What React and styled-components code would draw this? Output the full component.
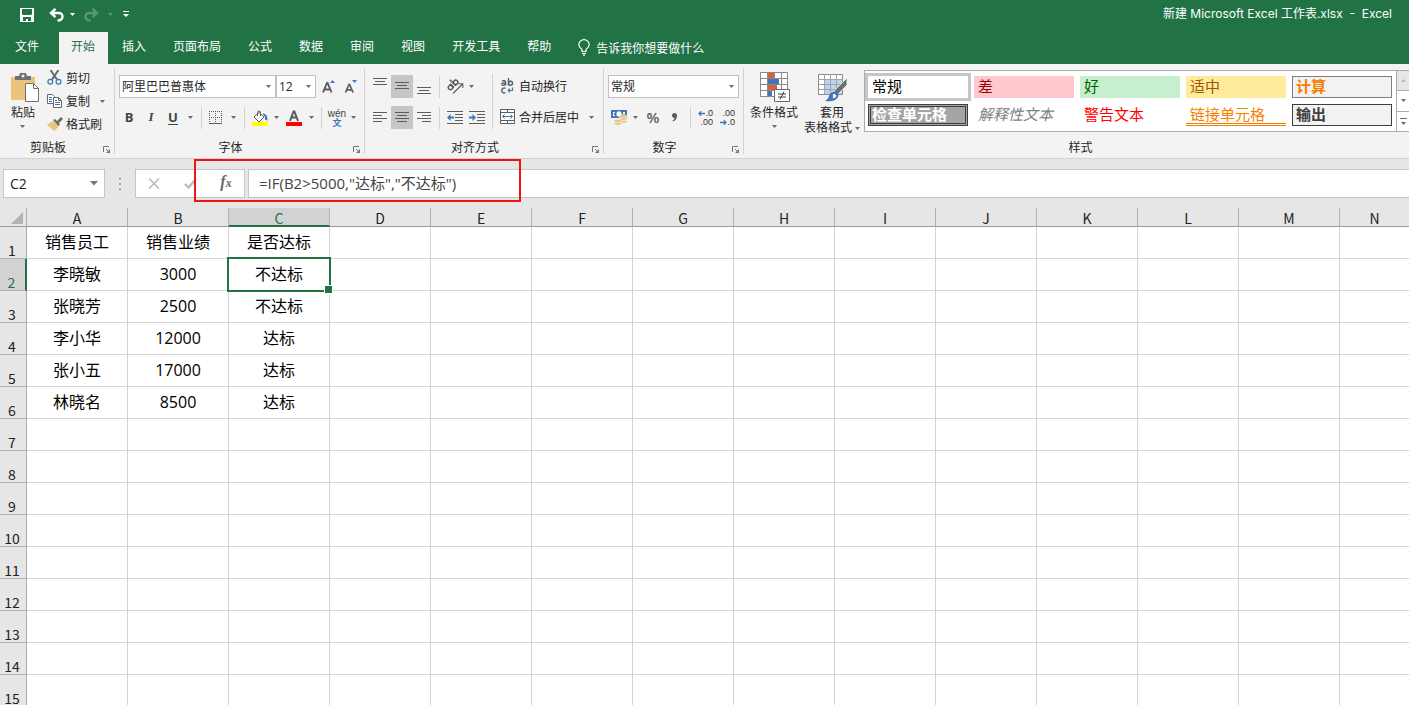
import React from 'react';
import styled, { createGlobalStyle, css } from 'styled-components';

const COLUMNS = ['A', 'B', 'C', 'D', 'E', 'F', 'G', 'H', 'I', 'J', 'K', 'L', 'M', 'N'];

const DATA = [
  ['销售员工', '销售业绩', '是否达标'],
  ['李晓敏', '3000', '不达标'],
  ['张晓芳', '2500', '不达标'],
  ['李小华', '12000', '达标'],
  ['张小五', '17000', '达标'],
  ['林晓名', '8500', '达标'],
];

const ROW_COUNT = 15;

const TABS = ['开始', '插入', '页面布局', '公式', '数据', '审阅', '视图', '开发工具', '帮助'];

const CELL_STYLES = [
  { name: '常规', color: '#000', bg: '#fff', outline: '3px solid #c6c6c6', outside: true },
  { name: '差', color: '#9c0006', bg: '#ffc7ce' },
  { name: '好', color: '#006100', bg: '#c6efce' },
  { name: '适中', color: '#9c5700', bg: '#ffeb9c' },
  { name: '计算', color: '#fa7d00', bg: '#f2f2f2', outline: '1px solid #7f7f7f', bold: true },
  { name: '检查单元格', color: '#fff', bg: '#a5a5a5', outline: '3px double #3f3f3f', bold: true },
  { name: '解释性文本', color: '#7f7f7f', italic: true },
  { name: '警告文本', color: '#ff0000' },
  { name: '链接单元格', color: '#fa7d00', underline: true },
  { name: '输出', color: '#3f3f3f', bg: '#f2f2f2', outline: '1px solid #3f3f3f', bold: true },
];

/* ---------- icons ---------- */

const Arrow = ({ color = '#6a6a6a' }) => (
  <svg width="5" height="3" viewBox="0 0 5 3" fill={color}><path d="M0 0h5L2.5 3z" /></svg>
);

const SaveIcon = () => (
  <svg width="14" height="14" viewBox="0 0 14 14" fill="#fff" fillRule="evenodd">
    <path d="M0 0h14v14H0zM2 1v5l1 1h8l1-1V1zM3 9v4h3v-2h2v2h3V9z" />
  </svg>
);

const UndoIcon = ({ flip }) => (
  <svg width="15" height="14" viewBox="0 0 15 14" fill="none" stroke="#fff" strokeWidth="2.4" opacity={flip ? 0.25 : 1}>
    <g transform={flip ? 'translate(15 0) scale(-1 1)' : undefined}>
      <path d="M6.5 0.8L2 5l4.500 4.200M2.500 5H9.500c3 0 4 1.600 4 3.500 0 2.500-2 4-5 4" />
    </g>
  </svg>
);

const CustomizeIcon = () => (
  <svg width="6" height="7" viewBox="0 0 6 7" fill="#fff"><path d="M0 0h6v1H0zM0 3h6L3 6z" /></svg>
);

const BulbIcon = () => (
  <svg width="12" height="17" viewBox="0 0 12 17" fill="none" stroke="#fff" strokeWidth="1.2">
    <path d="M4 12.500V10.500C2 9 .8 7.800.8 5.600a5.200 4.900 0 0 1 10.400 0C11.200 7.800 10 9 8 10.500v2zM4 14.500h4M5 16.200h2" />
  </svg>
);

const PasteIcon = () => (
  <svg width="34" height="31" viewBox="-5 0 34 31">
    <path d="M0 5h24v23H0z" fill="#ecc37b" />
    <path d="M4 8V4h4l1-3h6l1 3h4v4z" fill="#717171" />
    <circle cx="12" cy="4" r="1.500" fill="#f3f3f3" />
    <path d="M14.500 11.500h8l5 5v13h-13z" fill="#fff" stroke="#717171" />
    <path d="M22.500 11.500v5h5" fill="none" stroke="#717171" />
  </svg>
);

const CutIcon = () => (
  <svg width="15" height="15" viewBox="0 0 15 15" fill="none">
    <path d="M3.500 0L10 9.500M11.500 0L5 9.500" stroke="#6a6a6a" strokeWidth="2" />
    <circle cx="3.300" cy="11.700" r="2.400" stroke="#3f78b4" strokeWidth="1.200" />
    <circle cx="11.500" cy="11.700" r="2.400" stroke="#3f78b4" strokeWidth="1.200" />
  </svg>
);

const CopyIcon = () => (
  <svg width="15" height="14" viewBox="0 0 15 14">
    <path d="M.5.5h5l2 2v7h-7z" fill="#fff" stroke="#6a6a6a" />
    <path d="M2 3.500h3M2 5.500h3M2 7.500h3" stroke="#3f78b4" />
    <path d="M6.500 3.500h5l3 3v7h-8z" fill="#fff" stroke="#6a6a6a" />
    <path d="M11.500 3.500v3h3" fill="none" stroke="#6a6a6a" />
    <path d="M8 6.500h2M8 8.500h5M8 10.500h5" stroke="#3f78b4" />
  </svg>
);

const BrushIcon = () => (
  <svg width="16" height="14" viewBox="0 0 16 14">
    <path d="M6 4l6 5-4.500 5C4.500 12 2 10 0 7.500z" fill="#ecc37b" />
    <path d="M6 3l2-1 5 5-1.500 2zM10 4l4-4 2 2-4 4z" fill="#6a6a6a" />
  </svg>
);

const LauncherIcon = () => (
  <svg width="8" height="8" viewBox="0 0 8 8" fill="none" stroke="#777">
    <path d="M.5 6V.5H6M3 3l3.500 3.500" />
    <path d="M7 3v4H3z" fill="#777" stroke="none" />
  </svg>
);

const GrowIcon = ({ down }) => (
  <svg width="14" height="16" viewBox="0 0 14 16">
    {down ? (
      <>
        <path d="M1.500 13.500L5 5.500h.6l3.500 8M2.800 10.800h5" fill="none" stroke="#5c5c5c" strokeWidth="1.700" />
        <path d="M8 1h5l-2.500 3z" fill="#3f78b4" />
      </>
    ) : (
      <>
        <path d="M1 13.500L5 4h.6l4 9.500M2.500 10.500h5.500" fill="none" stroke="#5c5c5c" strokeWidth="1.900" />
        <path d="M8 4h5l-2.500-3z" fill="#3f78b4" />
      </>
    )}
  </svg>
);

const BorderIcon = () => (
  <svg width="14" height="14" viewBox="0 0 14 14" stroke="#5c5c5c">
    <path d="M0 .5h13M0 6.500h13M.5 0v13M6.500 0v13M12.500 0v13" strokeDasharray="1 1" />
    <path d="M0 12.500h13" />
  </svg>
);

const BucketIcon = () => (
  <svg width="16" height="16" viewBox="0 0 16 16">
    <path d="M7 2.500L12 7l-5 5-5-5z" fill="#fff" stroke="#5c5c5c" />
    <path d="M5.500 6V2.500a1.500 1.500 0 0 1 3 0V6" fill="none" stroke="#5c5c5c" />
    <path d="M10.500 3.500c3.500 0 5 2 5 7-2 0-3-1-2.500-3.500z" fill="#3f78b4" />
    <path d="M0 12h16v4H0z" fill="#ff0" />
  </svg>
);

const FontColorIcon = () => (
  <svg width="16" height="16" viewBox="0 0 16 16">
    <path d="M4 11L7.600 1.500h.8L12 11M5.500 7.500h5" fill="none" stroke="#5c5c5c" strokeWidth="2" />
    <path d="M0 12h16v4H0z" fill="#f00" />
  </svg>
);

const LINES = {
  full: [[0, 14], [2, 10], [0, 14]],
  left: [[0, 14], [0, 9], [0, 14], [0, 9]],
  center: [[0, 14], [2, 10], [0, 14], [2, 10]],
  right: [[0, 14], [5, 9], [0, 14], [5, 9]],
};

const LinesIcon = ({ kind, top = 1 }) => (
  <svg width="14" height="17" viewBox="0 0 14 17" fill="#5c5c5c">
    {LINES[kind].map(([x, w], i) => (
      <rect key={i} x={x} y={top + i * 3} width={w} height="1" />
    ))}
  </svg>
);

const OrientationIcon = () => (
  <svg width="18" height="17" viewBox="0 0 18 17" fill="none" stroke="#5c5c5c" strokeWidth="1.500">
    <g transform="rotate(-45 6 7)">
      <circle cx="2.500" cy="7" r="2.200" />
      <path d="M4.800 4v5.500M7.500 1v8.500" />
      <circle cx="9.800" cy="7" r="2.200" />
    </g>
    <path d="M6 15.500L15.500 6M11.500 5.700h4.300V10" strokeWidth="1.100" />
  </svg>
);

const IndentIcon = ({ more }) => (
  <svg width="16" height="15" viewBox="0 0 16 15">
    <path d="M0 1.500h16M8 4.500h8M8 7.500h8M8 10.500h8M0 13.500h16" stroke="#5c5c5c" />
    <path d={more ? 'M7 7.500L3.500 4v2.500H0v2h3.500V11z' : 'M0 7.500L3.500 4v2.500H7v2H3.500V11z'} fill="#3f78b4" />
  </svg>
);

const WrapIcon = () => (
  <svg width="13" height="16" viewBox="0 0 13 16" fill="none" stroke="#5c5c5c" strokeWidth="1.400">
    <path d="M1 3.200c1.500-.9 3.600-.6 3.600 1v3.300M4.600 5C2 4.800.8 5.300.8 6.200c0 1.500 2.800 1.500 3.800 0M7.500 0v7.500" />
    <circle cx="9.500" cy="5.200" r="2" />
    <path d="M4.500 10.300c-2-.8-3.700.2-3.700 2.200s1.700 3 3.700 2.100" />
    <path d="M11.500 9.500v3H7.500M9 10.700l-1.800 1.800L9 14.300" stroke="#3f78b4" strokeWidth="1.200" />
  </svg>
);

const MergeIcon = () => (
  <svg width="15" height="15" viewBox="0 0 15 15" fill="none">
    <path d="M.5.5h14v14H.5zM.5 3.500h14M.5 11.500h14M7.500 0v3.500M7.500 11.500v3" stroke="#5c5c5c" fill="#fff" />
    <path d="M2.500 7.500h10M4.500 5.500l-2 2 2 2M10.500 5.500l2 2-2 2" stroke="#3f78b4" />
  </svg>
);

const CurrencyIcon = () => (
  <svg width="16" height="17" viewBox="0 0 16 17">
    <path d="M0 1h16v8H0z" fill="#3f78b4" />
    <path d="M2 3h2v1H3v2h1v1H2zM12 3h2v2h-2z" fill="#fff" />
    <ellipse cx="8" cy="5" rx="2.600" ry="2.800" fill="#fff" />
    <g fill="#ecc37b" stroke="#f3f3f3" strokeWidth=".7">
      <ellipse cx="12" cy="12.500" rx="4" ry="1.800" />
      <ellipse cx="12" cy="10" rx="4" ry="1.800" />
      <ellipse cx="12" cy="7.500" rx="4" ry="1.800" />
      <ellipse cx="7" cy="14.500" rx="4" ry="1.800" />
      <ellipse cx="7" cy="12" rx="4" ry="1.800" />
    </g>
  </svg>
);

const CommaIcon = () => (
  <svg width="6" height="9" viewBox="0 0 6 9" fill="#5c5c5c">
    <path d="M0 2.500a2.500 2.500 0 0 1 5 0c0 3-1.200 5-4 6l-.5-.9C1.800 6.900 2.400 6 2.500 5 1 5 0 4 0 2.500z" />
  </svg>
);

const DecimalArrow = ({ right }) => (
  <svg width="7" height="5" viewBox="0 0 7 5" fill="none" stroke="#3f78b4" strokeWidth="1.300">
    <path d={right ? 'M0 2.500h6M3.800.3L6 2.500 3.800 4.700' : 'M7 2.500H1M3.200.3L1 2.500l2.200 2.200'} />
  </svg>
);

const ConditionalIcon = () => (
  <svg width="33" height="31" viewBox="-2 0 33 31">
    <path d="M.5.500h27v24H.5z" fill="#fff" stroke="#8a8a8a" />
    <path d="M.5 6.500h27M.5 12.500h27M.5 18.500h27M7.500 0v24M14.500 0v24M21.500 0v24" stroke="#8a8a8a" fill="none" />
    <path d="M8 1h6v5H8zM8 13h9v5H8z" fill="#d8603c" />
    <path d="M8 7h11v5H8zM8 19h4v5H8z" fill="#3f78b4" />
    <path d="M14.500 17.500h15v12h-15z" fill="#fff" stroke="#6a6a6a" />
    <path d="M18 22h8M18 25h8M24 19.500l-4 8" stroke="#444" fill="none" />
  </svg>
);

const FormatTableIcon = () => (
  <svg width="31" height="31" viewBox="0 0 31 31">
    <path d="M1.500 2.500h24v20h-24z" fill="#fff" stroke="#8a8a8a" />
    <path d="M8 7h17v15H8z" fill="#bfd4ea" />
    <path d="M1.500 7.500h24M1.500 12.500h24M1.500 17.500h24M7.500 2v20M13.500 2v20M19.500 2v20" stroke="#9aa5b0" fill="none" />
    <path d="M30 6v7l-9 9-4-3z" fill="#6f6f6f" stroke="#f3f3f3" strokeWidth=".8" />
    <path d="M16 20c4-1.500 7 1.500 5 5-2 4-7 5-13 4 3-1.500 3-3 4-5 .8-2 2-3.500 4-4z" fill="#3f78b4" />
    <path d="M16 22c2-.5 4 .8 3 2.800-.8 1.500-2 1.700-3.200 1.200z" fill="#f3f3f3" />
  </svg>
);

const CancelIcon = () => (
  <svg width="12" height="11" viewBox="0 0 12 11" stroke="#bcbcbc" strokeWidth="1.600"><path d="M1 .5l10 10M11 .5l-10 10" /></svg>
);

const EnterIcon = () => (
  <svg width="13" height="11" viewBox="0 0 13 11" fill="none" stroke="#bcbcbc" strokeWidth="2.400"><path d="M1 6l3.500 3.500L12 1" /></svg>
);

/* ---------- page ---------- */

function DropButton({ width, label }) {
  return <ToolButton $w={width} aria-label={label}><Arrow /></ToolButton>;
}

function RibbonGroup({ label, width, children, launcher = true }) {
  return (
    <Group $w={width}>
      <GroupBody>{children}</GroupBody>
      <GroupFooter $indent={!launcher}>
        <GroupName>{label}</GroupName>
        {launcher && <Launcher aria-label={`${label}设置`}><LauncherIcon /></Launcher>}
      </GroupFooter>
    </Group>
  );
}

function Combo({ label, value, width }) {
  return (
    <ComboBox $w={width}>
      <select aria-label={label} defaultValue={value}>
        <option>{value}</option>
      </select>
      <Arrow />
    </ComboBox>
  );
}

function Ribbon() {
  return (
    <RibbonBar>
      <RibbonGroup label="剪贴板" width={115}>
        <BigButton $w={38}>
          <PasteIcon />
          <span>粘贴</span>
          <ArrowLine><Arrow /></ArrowLine>
        </BigButton>
        <ClipList>
          <SmallButton><IconBox $w={16}><CutIcon /></IconBox>剪切</SmallButton>
          <ToolRow>
            <SmallButton><IconBox $w={16}><CopyIcon /></IconBox>复制</SmallButton>
            <DropButton width={24} label="复制选项" />
          </ToolRow>
          <SmallButton><IconBox $w={16}><BrushIcon /></IconBox>格式刷</SmallButton>
        </ClipList>
      </RibbonGroup>

      <RibbonGroup label="字体" width={250}>
        <ToolRows>
          <ToolRow>
            <Combo label="字体" value="阿里巴巴普惠体" width={157} />
            <Combo label="字号" value="12" width={40} />
            <ToolButton $w={26} aria-label="增大字号"><GrowIcon /></ToolButton>
            <ToolButton $w={18} aria-label="减小字号"><GrowIcon down /></ToolButton>
          </ToolRow>
          <ToolRow>
            <ToolButton $w={20}><Letter $bold>B</Letter></ToolButton>
            <ToolButton $w={24}><Letter $italic>I</Letter></ToolButton>
            <ToolButton $w={20}><Letter $bold $underline>U</Letter></ToolButton>
            <DropButton width={14} label="下划线选项" />
            <Divider />
            <ToolButton $w={20} aria-label="边框"><BorderIcon /></ToolButton>
            <DropButton width={14} label="边框选项" />
            <Divider />
            <ToolButton $w={22} aria-label="填充颜色"><BucketIcon /></ToolButton>
            <DropButton width={11} label="填充颜色选项" />
            <ToolButton $w={23} aria-label="字体颜色"><FontColorIcon /></ToolButton>
            <DropButton width={12} label="字体颜色选项" />
            <Divider />
            <ToolButton $w={22}>
              <Pinyin><span>wén</span><b>文</b></Pinyin>
            </ToolButton>
            <DropButton width={11} label="拼音选项" />
          </ToolRow>
        </ToolRows>
      </RibbonGroup>

      <RibbonGroup label="对齐方式" width={239}>
        <ToolRows>
          <ToolRow>
            <ToolButton $w={22} aria-label="顶端对齐"><LinesIcon kind="full" top={0} /></ToolButton>
            <ToolButton $w={22} $active aria-label="垂直居中"><LinesIcon kind="full" top={4} /></ToolButton>
            <ToolButton $w={22} aria-label="底端对齐"><LinesIcon kind="full" top={9} /></ToolButton>
            <Divider />
            <ToolButton $w={24} aria-label="方向"><OrientationIcon /></ToolButton>
            <DropButton width={6} label="方向选项" />
          </ToolRow>
          <ToolRow>
            <ToolButton $w={22} aria-label="左对齐"><LinesIcon kind="left" top={3} /></ToolButton>
            <ToolButton $w={22} $active aria-label="居中"><LinesIcon kind="center" top={3} /></ToolButton>
            <ToolButton $w={22} aria-label="右对齐"><LinesIcon kind="right" top={3} /></ToolButton>
            <Divider />
            <ToolButton $w={22} aria-label="减少缩进量"><IndentIcon /></ToolButton>
            <ToolButton $w={22} aria-label="增加缩进量"><IndentIcon more /></ToolButton>
          </ToolRow>
        </ToolRows>
        <TallDivider />
        <ToolRows>
          <SmallButton><IconBox $w={16}><WrapIcon /></IconBox>自动换行</SmallButton>
          <ToolRow>
            <SmallButton><IconBox $w={16}><MergeIcon /></IconBox>合并后居中</SmallButton>
            <DropButton width={24} label="合并选项" />
          </ToolRow>
        </ToolRows>
      </RibbonGroup>

      <RibbonGroup label="数字" width={140}>
        <ToolRows>
          <Combo label="数字格式" value="常规" width={131} />
          <ToolRow>
            <ToolButton $w={22} aria-label="会计数字格式"><CurrencyIcon /></ToolButton>
            <DropButton width={10} label="会计数字格式选项" />
            <ToolButton $w={26}><Percent>%</Percent></ToolButton>
            <ToolButton $w={17} aria-label="千位分隔样式"><CommaIcon /></ToolButton>
            <Divider $wide />
            <ToolButton $w={22}>
              <Decimals>
                <div><DecimalArrow />.0</div>
                <div>.00</div>
              </Decimals>
            </ToolButton>
            <ToolButton $w={22}>
              <Decimals>
                <div>.00</div>
                <div><DecimalArrow right />.0</div>
              </Decimals>
            </ToolButton>
          </ToolRow>
        </ToolRows>
      </RibbonGroup>

      <RibbonGroup label="样式" launcher={false}>
        <BigButton $w={52}>
          <ConditionalIcon />
          <span>条件格式</span>
          <ArrowLine><Arrow /></ArrowLine>
        </BigButton>
        <BigButton $w={64}>
          <FormatTableIcon />
          <span>套用</span>
          <span>表格格式 <Arrow /></span>
        </BigButton>
        <Gallery>
          <GalleryGrid>
            {CELL_STYLES.map((s) => (
              <StyleCell key={s.name} $s={s}>{s.name}</StyleCell>
            ))}
          </GalleryGrid>
          <GalleryScroll>
            <button disabled aria-label="上一行">
              <svg width="5" height="3" viewBox="0 0 5 3" fill="#bbb"><path d="M0 3h5L2.500 0z" /></svg>
            </button>
            <button aria-label="下一行"><Arrow /></button>
            <button aria-label="其他">
              <svg width="7" height="7" viewBox="0 0 7 7" fill="#6a6a6a"><path d="M0 0h7v1H0zM1 4h5L3.500 7z" /></svg>
            </button>
          </GalleryScroll>
        </Gallery>
      </RibbonGroup>
    </RibbonBar>
  );
}

function Sheet() {
  const rows = Array.from({ length: ROW_COUNT }, (_, i) => DATA[i] || []);
  return (
    <Grid>
      <colgroup>
        <col className="head" />
        {COLUMNS.map((c, i) => (
          <col key={c} className={i < COLUMNS.length - 1 ? 'col' : undefined} />
        ))}
      </colgroup>
      <thead>
        <tr>
          <Corner aria-label="全选">
            <svg width="12" height="12" viewBox="0 0 12 12" fill="#b4b4b4"><path d="M12 0v12H0z" /></svg>
          </Corner>
          {COLUMNS.map((c) => <ColHead key={c} $active={c === 'C'}>{c}</ColHead>)}
        </tr>
      </thead>
      <tbody>
        {rows.map((row, r) => (
          <tr key={r}>
            <RowHead $active={r === 1}>{r + 1}</RowHead>
            {COLUMNS.map((c, i) => (
              <Cell key={c} $selected={r === 1 && c === 'C'}>{row[i]}</Cell>
            ))}
          </tr>
        ))}
      </tbody>
    </Grid>
  );
}

function App() {
  return (
    <Page>
      <GlobalStyle />
      <TitleBar>
        <QuickAccess>
          <ToolButton $w={28} aria-label="保存"><SaveIcon /></ToolButton>
          <ToolButton $w={30} aria-label="撤消"><UndoIcon /></ToolButton>
          <ToolButton $w={2} aria-label="撤消选项"><Arrow color="#fff" /></ToolButton>
          <ToolButton $w={36} aria-label="恢复"><UndoIcon flip /></ToolButton>
          <ToolButton $w={2} aria-label="恢复选项"><Arrow color="#5b9877" /></ToolButton>
          <ToolButton $w={30} aria-label="自定义快速访问工具栏"><CustomizeIcon /></ToolButton>
        </QuickAccess>
        <WindowTitle>新建 Microsoft Excel 工作表.xlsx&nbsp; -&nbsp; Excel</WindowTitle>
      </TitleBar>
      <TabBar>
        <FileTab>文件</FileTab>
        {TABS.map((t) => <Tab key={t} $active={t === '开始'}>{t}</Tab>)}
        <TellMe><BulbIcon />告诉我你想要做什么</TellMe>
      </TabBar>
      <Ribbon />
      <FormulaBar>
        <NameBox>
          <input aria-label="名称框" defaultValue="C2" />
          <svg width="8" height="5" viewBox="0 0 8 5" fill="#777"><path d="M0 0h8L4 4.500z" /></svg>
        </NameBox>
        <Grip><i /><i /><i /></Grip>
        <FormulaTools>
          <ToolButton $w={36} aria-label="取消"><CancelIcon /></ToolButton>
          <ToolButton $w={36} aria-label="输入"><EnterIcon /></ToolButton>
          <ToolButton $w={36}><Fx>f<small>x</small></Fx></ToolButton>
        </FormulaTools>
        <FormulaInput aria-label="编辑栏" defaultValue={'=IF(B2>5000,"达标","不达标")'} />
        <Highlight />
      </FormulaBar>
      <Sheet />
    </Page>
  );
}

const GlobalStyle = createGlobalStyle`
  * {
    box-sizing: border-box;
  }
  body {
    margin: 0;
    overflow: hidden;
    background: #fff;
    font-family: "Open Sans", "Noto Sans CJK SC", sans-serif;
    font-size: 12px;
    color: #262626;
  }
  button, input, select {
    font: inherit;
    color: inherit;
    margin: 0;
    padding: 0;
    border: 0;
    background: none;
    outline: none;
  }
  svg {
    display: block;
    flex: none;
  }
`

const Page = styled.div`
  height: 100vh;
  overflow: hidden;
`

const TitleBar = styled.header`
  display: flex;
  justify-content: space-between;
  height: 32px;
  padding: 0 17px 0 13px;
  background: #217346;
  color: #fff;
`

const QuickAccess = styled.div`
  display: flex;
  align-items: center;
  height: 29px;
`

const WindowTitle = styled.div`
  font-family: Inter, "Noto Sans CJK SC", sans-serif;
  line-height: 28px;
  white-space: pre;
`

const TabBar = styled.nav`
  display: flex;
  gap: 2px;
  height: 32px;
  background: #217346;
`

const Tab = styled.button`
  padding: 0 13px 4px 12px;
  white-space: nowrap;
  color: ${(p) => (p.$active ? '#217346' : '#fff')};
  background: ${(p) => (p.$active ? '#f3f3f3' : 'none')};
`

const FileTab = styled(Tab)`
  padding: 0 18px 4px 15px;
`

const TellMe = styled.button`
  display: flex;
  align-items: center;
  gap: 6px;
  margin-left: 12px;
  padding-bottom: 1px;
  color: #fff;
  white-space: nowrap;
`

const RibbonBar = styled.section`
  display: flex;
  padding: 4px 0;
  background: #f3f3f3;
  border-bottom: 1px solid #d2d2d2;
`

const Group = styled.div`
  display: flex;
  flex-direction: column;
  height: 86px;
  flex: ${(p) => (p.$w ? 'none' : '1')};
  min-width: 0;
  width: ${(p) => (p.$w ? `${p.$w}px` : 'auto')};
  border-right: ${(p) => (p.$w ? '1px solid #d2d2d2' : '0')};
`

const GroupBody = styled.div`
  display: flex;
  height: 70px;
  padding-left: 4px;
`

const GroupFooter = styled.div`
  display: flex;
  align-items: flex-end;
  height: 16px;
  padding-left: ${(p) => (p.$indent ? '8px' : '0')};
`

const GroupName = styled.div`
  flex: 1;
  line-height: 12px;
  text-align: center;
`

const Launcher = styled.button`
  width: 18px;
  padding: 0 3px 0 7px;
`

const ToolRows = styled.div`
  display: flex;
  flex-direction: column;
  gap: 8px;
  padding-top: 7px;
`

const ToolRow = styled.div`
  display: flex;
  align-items: center;
  height: 23px;
`

const ToolButton = styled.button`
  display: flex;
  align-items: center;
  justify-content: center;
  width: ${(p) => p.$w}px;
  height: 23px;
  background: ${(p) => (p.$active ? '#c6c6c6' : 'none')};
`

const SmallButton = styled.button`
  display: flex;
  align-items: center;
  gap: 3px;
  height: 23px;
  padding-bottom: 2px;
  white-space: nowrap;
`

const IconBox = styled.span`
  display: flex;
  justify-content: center;
  width: ${(p) => p.$w}px;
`

const ClipList = styled.div`
  margin-top: -1px;
  padding-left: 5px;
`

const BigButton = styled.button`
  display: flex;
  flex-direction: column;
  align-items: center;
  width: ${(p) => p.$w}px;
  padding-top: 4px;
  white-space: nowrap;
  line-height: 15px;

  > svg {
    margin-bottom: 2px;
  }
  span svg {
    display: inline-block;
    vertical-align: middle;
  }
`

const ArrowLine = styled.span`
  display: flex;
  align-items: center;
  height: 13px;
`

const Divider = styled.i`
  width: 1px;
  height: 22px;
  margin: 0 ${(p) => (p.$wide ? '3px 0 7px' : '4px')};
  background: #d2d2d2;
`

const TallDivider = styled.i`
  width: 1px;
  height: 55px;
  margin: 6px 7px 0 4px;
  background: #d2d2d2;
`

const ComboBox = styled.div`
  position: relative;
  width: ${(p) => p.$w}px;
  height: 23px;

  select {
    appearance: none;
    width: 100%;
    height: 100%;
    padding-left: 2px;
    border: 1px solid #c0c0c0;
    background: #fff;
  }
  svg {
    position: absolute;
    right: 5px;
    top: 10px;
    pointer-events: none;
  }
`

const Letter = styled.span`
  font-size: 13px;
  line-height: 16px;
  padding-bottom: 2px;
  color: #444;
  font-weight: ${(p) => (p.$bold ? 700 : 600)};
  font-family: ${(p) => (p.$italic ? '"Liberation Serif", serif' : 'inherit')};
  font-style: ${(p) => (p.$italic ? 'italic' : 'normal')};
  text-decoration: ${(p) => (p.$underline ? 'underline' : 'none')};
  text-underline-offset: 2px;
`

const Pinyin = styled.span`
  display: flex;
  flex-direction: column;
  align-items: center;
  font: 10px/9px "Liberation Sans", sans-serif;
  color: #444;

  b {
    font: 700 9px/9px "Noto Sans CJK SC", sans-serif;
    color: #3f78b4;
  }
`

const Percent = styled.span`
  font-size: 15px;
  font-weight: 600;
  line-height: 18px;
  padding-bottom: 2px;
  color: #5c5c5c;
`

const Decimals = styled.span`
  width: 16px;
  font: 9px/9px "Liberation Sans", sans-serif;
  color: #333;

  div {
    display: flex;
    align-items: center;
    justify-content: flex-end;
  }
`

const Gallery = styled.div`
  display: flex;
  flex: 1;
  height: 62px;
  margin-top: 2px;
  border: 1px solid #ababab;
  border-right: 0;
  background: #fff;
`

const GalleryGrid = styled.div`
  display: grid;
  flex: 1;
  grid-template-columns: repeat(5, 1fr);
  grid-auto-rows: 22px;
  gap: 6px;
  padding: 5px 4px 5px 3px;
`

const StyleCell = styled.button`
  padding: 0 4px 3px;
  text-align: left;
  font-size: 15px;
  line-height: 18px;
  white-space: nowrap;
  color: ${(p) => p.$s.color};
  background: ${(p) => p.$s.bg || 'none'};
  outline: ${(p) => p.$s.outline || 'none'};
  outline-offset: ${(p) => (p.$s.outside ? '0' : `-${parseInt(p.$s.outline || '0', 10)}px`)};
  font-weight: ${(p) => (p.$s.bold ? 700 : 400)};
  font-style: ${(p) => (p.$s.italic ? 'italic' : 'normal')};
  ${(p) => p.$s.underline && css`
    padding-bottom: 0;
    border-bottom: 3px double #fa7d00;
  `}
`

const GalleryScroll = styled.div`
  display: flex;
  flex-direction: column;
  width: 13px;
  border-left: 1px solid #ababab;

  button {
    display: flex;
    flex: 1;
    align-items: center;
    justify-content: center;
  }
  button + button {
    border-top: 1px solid #ababab;
  }
  button:disabled {
    background: #e6e6e6;
  }
`

const FormulaBar = styled.section`
  position: relative;
  display: flex;
  height: 49px;
  padding: 10px 0 10px 3px;
  background: #e6e6e6;
`

const NameBox = styled.div`
  display: flex;
  align-items: center;
  width: 102px;
  padding: 0 6px;
  border: 1px solid #c6c6c6;
  background: #fff;

  input {
    flex: 1;
    min-width: 0;
    font-size: 14px;
    color: #222;
  }
`

const Grip = styled.div`
  display: flex;
  flex-direction: column;
  justify-content: center;
  gap: 3px;
  padding: 0 14px;

  i {
    width: 2px;
    height: 2px;
    background: #a6a6a6;
  }
`

const FormulaTools = styled.div`
  display: flex;
  align-items: center;
  width: 110px;
  margin-right: 3px;
  border: 1px solid #c6c6c6;
  background: #fff;
`

const Fx = styled.span`
  font: italic 700 16px/18px "Liberation Serif", serif;
  padding-bottom: 2px;
  color: #6a6a6a;

  small {
    font-size: 12px;
  }
`

const FormulaInput = styled.input`
  flex: 1;
  padding: 0 10px 3px;
  border: 1px solid #c6c6c6;
  border-right: 0;
  background: #fff;
  font-size: 15px;
  color: #444;
`

const Highlight = styled.div`
  position: absolute;
  left: 194px;
  top: 0;
  width: 327px;
  height: 43px;
  border: 2px solid #f01414;
  pointer-events: none;
`

const Grid = styled.table`
  width: 100%;
  table-layout: fixed;
  border-collapse: separate;
  border-spacing: 0;

  .head {
    width: 27px;
  }
  .col {
    width: 101px;
  }
  th, td {
    white-space: nowrap;
  }
  th:last-child, td:last-child {
    border-right: 0;
  }
`

const Corner = styled.th`
  height: 19px;
  padding: 0;
  background: #e6e6e6;
  border-right: 1px solid #ababab;
  border-bottom: 1px solid #9b9b9b;

  svg {
    margin: 2px 0 0 11px;
  }
`

const ColHead = styled.th`
  height: 19px;
  padding: 3px 0 0;
  vertical-align: top;
  font-family: "Noto Sans CJK SC", sans-serif;
  font-size: 14px;
  font-weight: 400;
  line-height: 14px;
  border-right: 1px solid #b1b1b1;
  border-bottom: ${(p) => (p.$active ? '2px solid #217346' : '1px solid #9b9b9b')};
  background: ${(p) => (p.$active ? '#d2d2d2' : '#e6e6e6')};
  color: ${(p) => (p.$active ? '#217346' : '#222')};
`

const RowHead = styled.th`
  height: 32px;
  padding: 0 2px 0 0;
  font-family: "Noto Sans CJK SC", sans-serif;
  font-size: 14px;
  font-weight: 400;
  line-height: 16px;
  vertical-align: bottom;
  border-right: ${(p) => (p.$active ? '2px solid #217346' : '1px solid #ababab')};
  border-bottom: 1px solid #b1b1b1;
  background: ${(p) => (p.$active ? '#d2d2d2' : '#e6e6e6')};
  color: ${(p) => (p.$active ? '#217346' : '#222')};
`

const Cell = styled.td`
  position: relative;
  height: 32px;
  padding: 0 0 2px;
  font-size: 16px;
  line-height: 22px;
  text-align: center;
  color: #000;
  border-right: 1px solid #d4d4d4;
  border-bottom: 1px solid #d4d4d4;
  ${(p) => p.$selected && css`
    &::before {
      content: "";
      position: absolute;
      inset: -2px;
      border: 2px solid #217346;
      z-index: 1;
    }
    &::after {
      content: "";
      position: absolute;
      right: -4px;
      bottom: -4px;
      width: 7px;
      height: 7px;
      border: 1px solid #fff;
      background: #217346;
      z-index: 2;
    }
  `}
`

export default App
